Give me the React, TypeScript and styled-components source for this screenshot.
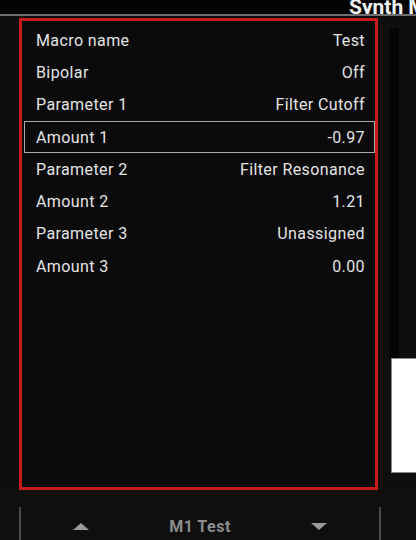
import React from "react";
import styled, { createGlobalStyle } from "styled-components";

type MacroRow = {
  label: string;
  value: string;
};

const rows: MacroRow[] = [
  { label: "Macro name", value: "Test" },
  { label: "Bipolar", value: "Off" },
  { label: "Parameter 1", value: "Filter Cutoff" },
  { label: "Amount 1", value: "-0.97" },
  { label: "Parameter 2", value: "Filter Resonance" },
  { label: "Amount 2", value: "1.21" },
  { label: "Parameter 3", value: "Unassigned" },
  { label: "Amount 3", value: "0.00" },
];

const SELECTED = 3;

const App = () => {
  return (
    <>
      <GlobalStyle />
      <Screen>
        <Header>
          <HeaderTitle>Synth Macros</HeaderTitle>
        </Header>
        <HeaderRule />
        <Body>
          <Panel>
            <RowList>
              {rows.map((row, i) => (
                <Row key={row.label} selected={i === SELECTED}>
                  <Label>{row.label}</Label>
                  <Value>{row.value}</Value>
                </Row>
              ))}
            </RowList>
          </Panel>
          <SideColumn>
            <SideStrip />
            <SideCard />
          </SideColumn>
        </Body>
        <Footer>
          <FooterNav>
            <NavCell>
              <Arrow direction="up" />
            </NavCell>
            <NavCell>
              <NavTitle>M1 Test</NavTitle>
            </NavCell>
            <NavCell>
              <Arrow direction="down" />
            </NavCell>
          </FooterNav>
        </Footer>
      </Screen>
    </>
  );
};

export default App;

const GlobalStyle = createGlobalStyle`
  html, body {
    margin: 0;
    padding: 0;
    background: #0e0e0e;
  }
  body {
    font-family: Roboto, "Liberation Sans", sans-serif;
  }
`;

const Screen = styled.div`
  width: 416px;
  height: 540px;
  overflow: hidden;
  background: #0e0e0e;
  display: flex;
  flex-direction: column;
`;

const Header = styled.div`
  height: 14px;
  background: #030303;
  position: relative;
  overflow: hidden;
  flex-shrink: 0;
`;

const HeaderTitle = styled.div`
  position: absolute;
  left: 349px;
  bottom: -4px;
  white-space: nowrap;
  color: #f2f2f2;
  font-weight: bold;
  font-size: 21px;
  line-height: 21px;
`;

const HeaderRule = styled.div`
  height: 2px;
  background: #6f6f6f;
  flex-shrink: 0;
`;

const Body = styled.div`
  display: flex;
  flex-direction: row;
  padding: 2px 0 0 19px;
  height: 472px;
  flex-shrink: 0;
`;

const Panel = styled.div`
  width: 359px;
  height: 472px;
  box-sizing: border-box;
  border: 3px solid #c8191b;
  background: #0a0a0a;
`;

const RowList = styled.div`
  display: flex;
  flex-direction: column;
  padding: 3px 0 0 2px;
`;

const Row = styled.div<{ selected: boolean }>`
  height: 32.3px;
  box-sizing: border-box;
  display: flex;
  flex-direction: row;
  justify-content: space-between;
  align-items: center;
  padding: 0 9px 0 11px;
  border: 1px solid ${(p) => (p.selected ? "#a9a9a9" : "transparent")};
  color: #e4e4e4;
  font-size: 16px;
  letter-spacing: 0.4px;
`;

const Label = styled.span`
  white-space: nowrap;
`;

const Value = styled.span`
  white-space: nowrap;
`;

const SideColumn = styled.div`
  flex: 1;
  display: flex;
  flex-direction: column;
  padding: 10px 0 0 11px;
`;

const SideStrip = styled.div`
  width: 10px;
  height: 330px;
  background: #040404;
`;

const SideCard = styled.div`
  margin-left: 2px;
  height: 113px;
  background: #ffffff;
  border: 1px solid #8a8a8a;
  border-right: none;
`;

const Footer = styled.div`
  flex: 1;
  background: #0f0f0f;
  padding: 17px 0 0 19px;
`;

const FooterNav = styled.div`
  width: 358px;
  height: 100%;
  display: grid;
  grid-template-columns: repeat(3, 1fr);
  border-left: 2px solid #4a4a4a;
  border-right: 2px solid #4a4a4a;
`;

const NavCell = styled.div`
  display: flex;
  justify-content: center;
  align-items: center;
  padding-top: 5px;
`;

const NavTitle = styled.span`
  color: #8c8c8c;
  font-weight: bold;
  font-size: 16px;
  letter-spacing: 0.5px;
`;

const Arrow = styled.div<{ direction: "up" | "down" }>`
  width: 0;
  height: 0;
  border-left: 8.5px solid transparent;
  border-right: 8.5px solid transparent;
  ${(p) =>
    p.direction === "up"
      ? "border-bottom: 7px solid #9a9a9a;"
      : "border-top: 7px solid #9a9a9a;"}
`;
